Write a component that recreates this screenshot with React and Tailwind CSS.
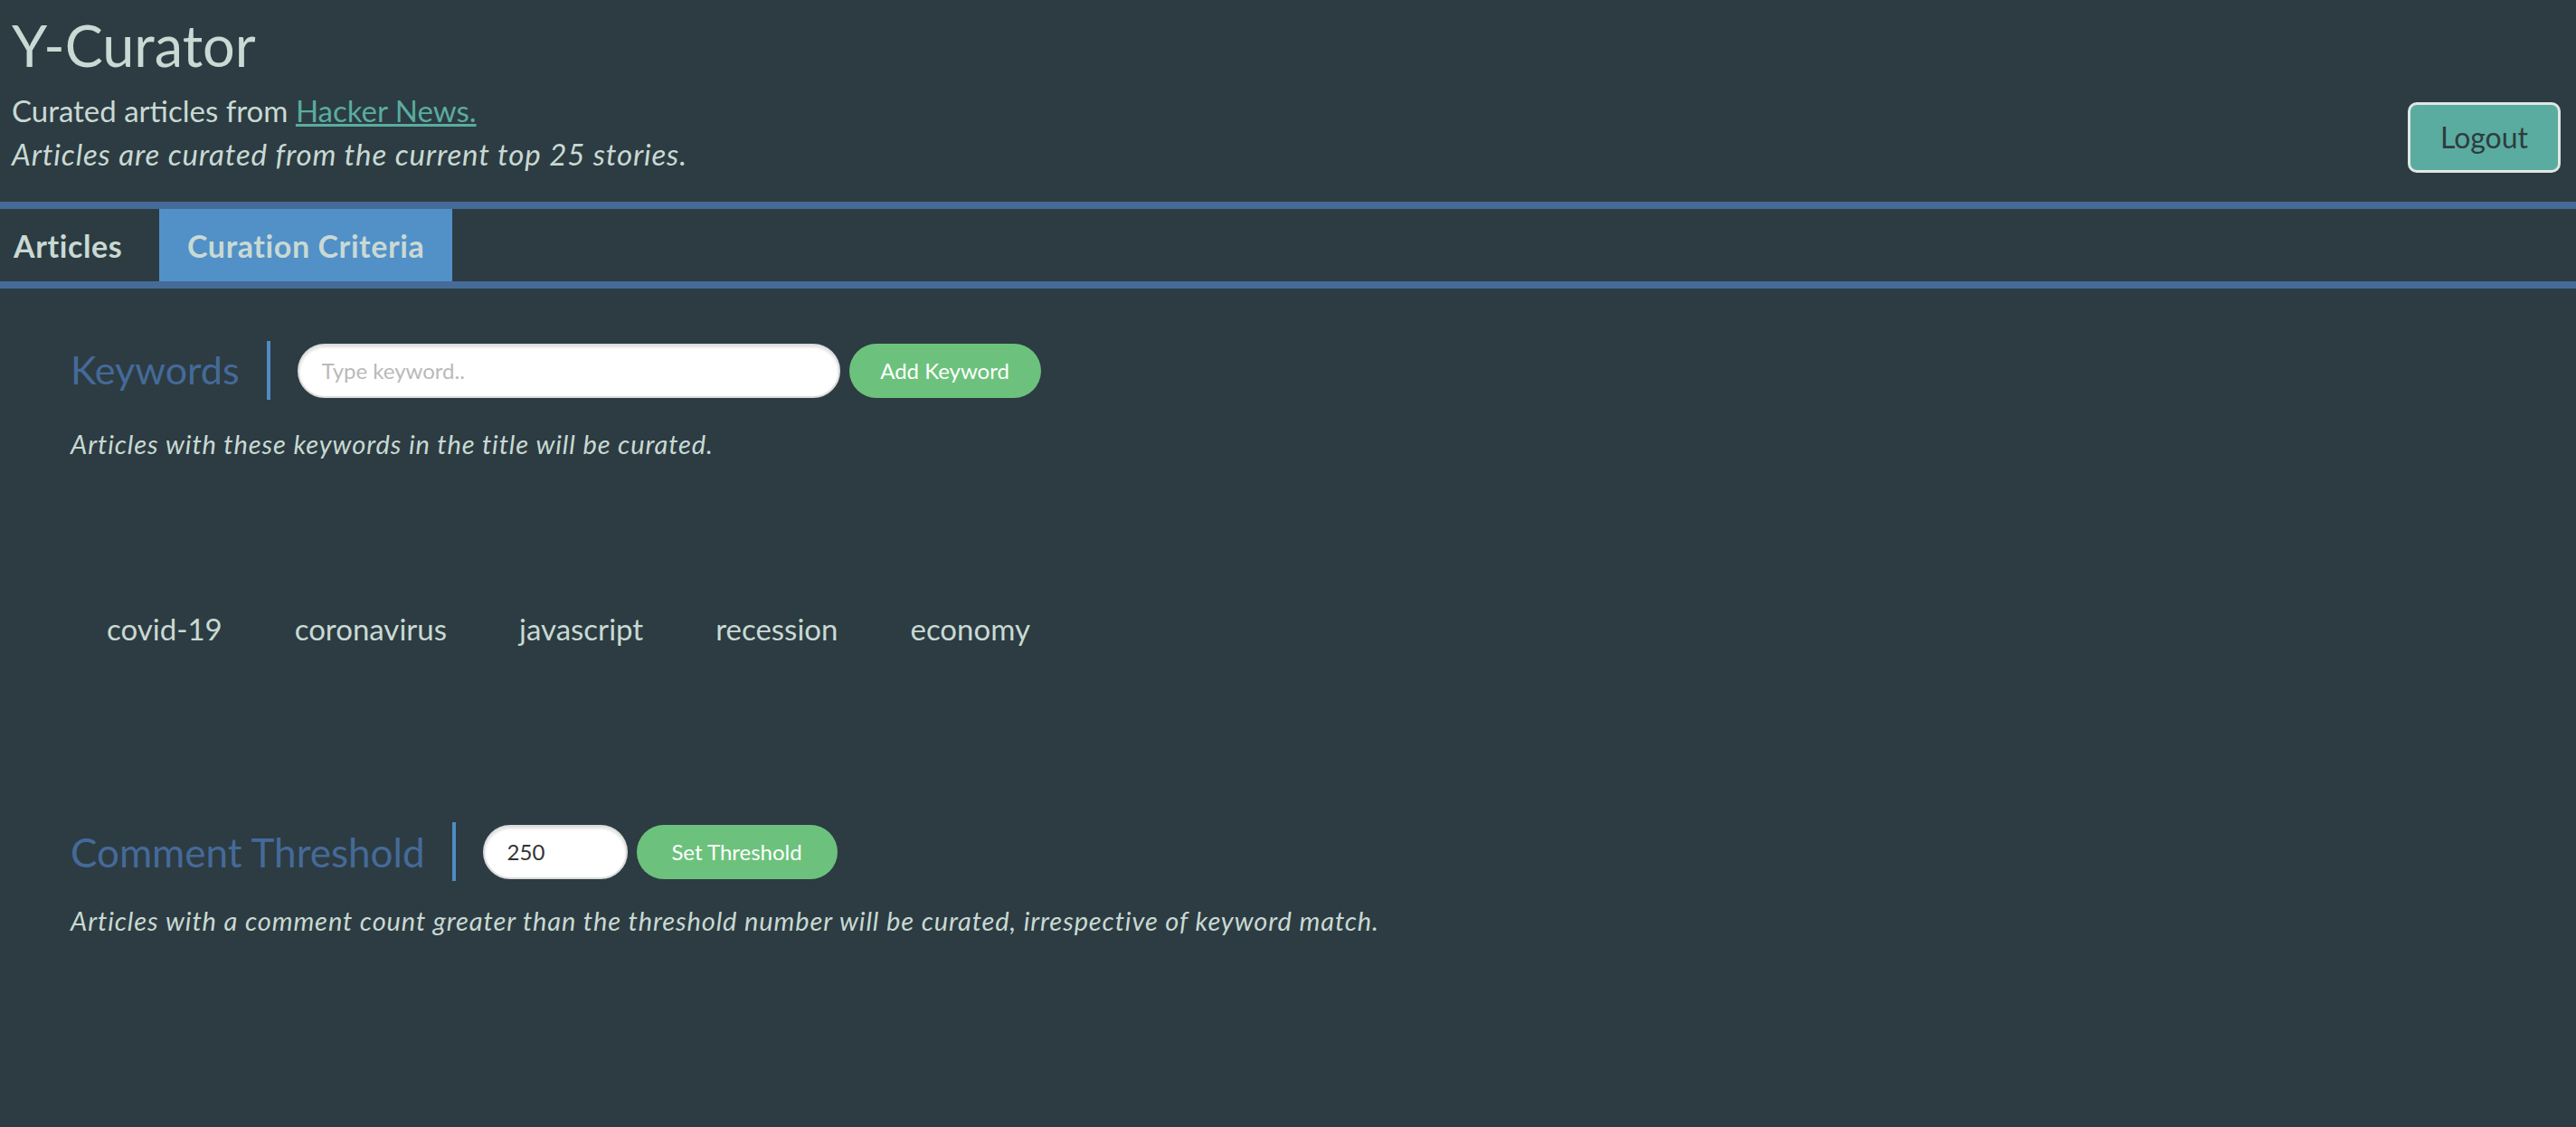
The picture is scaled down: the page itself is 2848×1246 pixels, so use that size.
import React, { useState } from 'react';

const KEYWORDS = ['covid-19', 'coronavirus', 'javascript', 'recession', 'economy'];

function SectionHeading({ children, size }) {
  return (
    <h2 className={`h-[65px] flex items-center pr-[30px] mr-[30px] border-r-4 border-[#4f8bc4] text-[#456a99] ${size}`}>
      {children}
    </h2>
  );
}

export default function App() {
  const [keyword, setKeyword] = useState('');
  const [threshold, setThreshold] = useState('250');

  return (
    <div className="min-h-[1246px] w-full bg-[#2c3c42] text-[#c9d9d3] font-['Lato',sans-serif]">
      <header className="flex justify-between items-end pl-[13px] pr-[17px] pb-[29px]">
        <div>
          <h1 className="pt-[11px] text-[63px] leading-[78px] text-[#c9d9d3]">Y-Curator</h1>
          <p className="mt-[9px] text-[33px] leading-[48px]">
            Curated articles from{' '}
            <a href="#" className="text-[#5aaca0] underline">Hacker News.</a>
          </p>
          <p className="text-[33px] leading-[48px] italic tracking-[0.85px]">
            Articles are curated from the current top 25 stories.
          </p>
        </div>
        <button className="mb-[3px] w-[169px] h-[78px] rounded-[10px] border-[3px] border-[#e0e7e4] bg-[#5aaca0] text-[32px] text-[#2e3c40]">
          Logout
        </button>
      </header>

      <nav className="flex h-[96px] border-y-8 border-[#456b99]">
        <button className="w-[176px] pl-[15px] text-left text-[34px] font-bold tracking-[0.6px]">Articles</button>
        <button className="px-[31px] bg-[#5191c8] text-[34px] font-bold tracking-[0.6px]">Curation Criteria</button>
      </nav>

      <main className="px-[78px] pt-[58px]">
        <section>
          <div className="flex items-center">
            <SectionHeading size="text-[43px]">Keywords</SectionHeading>
            <input
              value={keyword}
              onChange={(e) => setKeyword(e.target.value)}
              placeholder="Type keyword.."
              className="w-[600px] h-[60px] rounded-full bg-white border-2 border-[#dcdcdc] shadow-[inset_0_2px_3px_rgba(0,0,0,0.12)] pl-[25px] text-[24px] text-[#333] placeholder:text-[#b9b9b9] outline-none"
            />
            <button className="ml-[10px] w-[212px] h-[60px] rounded-full bg-[#6cc27c] text-[24px] text-white">
              Add Keyword
            </button>
          </div>
          <p className="mt-[29px] text-[29px] leading-[40px] italic tracking-[0.9px]">
            Articles with these keywords in the title will be curated.
          </p>
          <ul className="flex mt-[160px]">
            {KEYWORDS.map((k) => (
              <li key={k} className="px-[40px] text-[33px] leading-[48px]">{k}</li>
            ))}
          </ul>
        </section>

        <section className="mt-[190px]">
          <div className="flex items-center">
            <SectionHeading size="text-[44px]">Comment Threshold</SectionHeading>
            <input
              value={threshold}
              onChange={(e) => setThreshold(e.target.value)}
              className="w-[160px] h-[60px] rounded-full bg-white border-2 border-[#dcdcdc] shadow-[inset_0_2px_3px_rgba(0,0,0,0.12)] pl-[25px] text-[24px] text-[#333] outline-none"
            />
            <button className="ml-[10px] w-[222px] h-[60px] rounded-full bg-[#6cc27c] text-[24px] text-white">
              Set Threshold
            </button>
          </div>
          <p className="mt-[24px] text-[29px] leading-[40px] italic tracking-[0.9px]">
            Articles with a comment count greater than the threshold number will be curated, irrespective of keyword match.
          </p>
        </section>
      </main>
    </div>
  );
}
